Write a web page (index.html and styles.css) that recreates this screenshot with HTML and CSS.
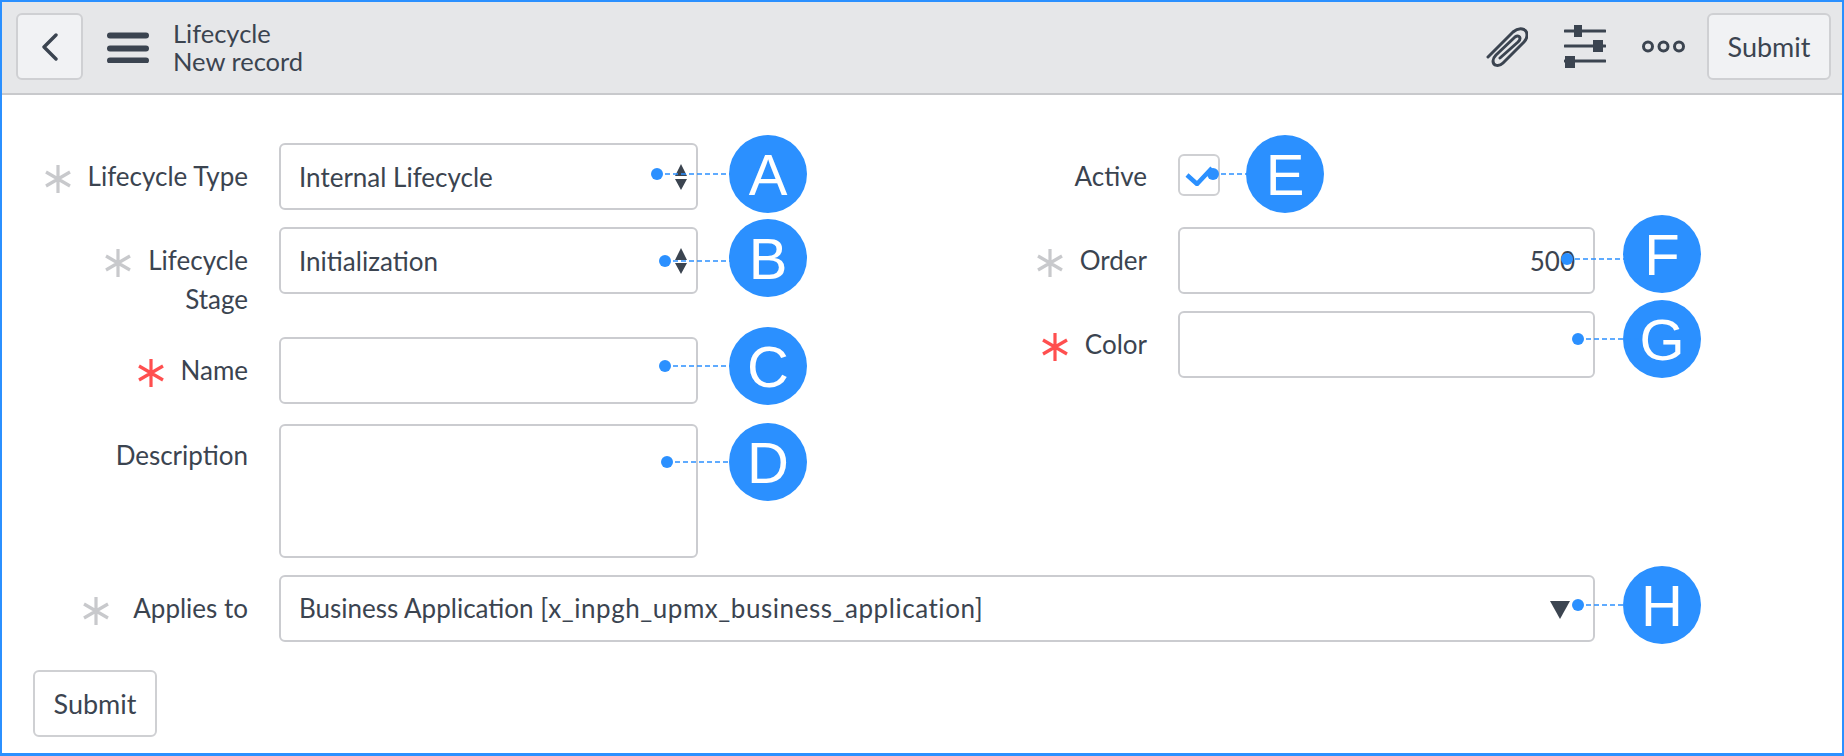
FILE: index.html
```html
<!DOCTYPE html>
<html lang="en">
<head>
<meta charset="utf-8">
<title>Lifecycle - New record</title>
<link rel="stylesheet" href="styles.css">
</head>
<body>
<svg class="defs" width="0" height="0" aria-hidden="true">
  <symbol id="star" viewBox="0 0 26 28">
    <path d="M13 0V28M1 7L25 21M25 7L1 21" fill="none" stroke="currentColor" stroke-width="3.200"/>
  </symbol>
</svg>
<div class="page">
  <header class="topbar">
    <button class="btn btn-back" aria-label="Back">
      <svg width="18" height="28" viewBox="0 0 18 28"><path d="M15 2L3 14L15 26" fill="none" stroke="#3b4450" stroke-width="3.400" stroke-linecap="round" stroke-linejoin="round"/></svg>
    </button>
    <svg class="menu" width="44" height="32" viewBox="0 0 44 32"><path d="M4 4.500H40M4 17.500H40M4 29.500H40" fill="none" stroke="#3b4450" stroke-width="6" stroke-linecap="round"/></svg>
    <div class="title"><div>Lifecycle</div><div>New record</div></div>
    <div class="tools">
      <svg class="clip" width="42" height="40" viewBox="0 0 42 40"><path d="M2 30L27 5C33 0 41 1 41 8C41 11 40 13 38 15L17 36C13 40 7 39 7 34C7 32 8 30 10 28L29 10C33 7 36 11 32 15L14 31" fill="none" stroke="#3b4450" stroke-width="3" stroke-linecap="round" stroke-linejoin="round"/></svg>
      <svg class="sliders" width="42" height="43" viewBox="0 0 42 43"><path d="M1 6H41M1 21H41M1 36H41" fill="none" stroke="#3b4450" stroke-width="3" stroke-linecap="round"/><path d="M10 0H18V12H10ZM29 15H39V27H29ZM1 31H11V43H1Z" fill="#3b4450"/></svg>
      <svg class="dots" width="43" height="13" viewBox="0 0 43 13"><circle cx="6" cy="6.500" r="4.500" fill="none" stroke="#3b4450" stroke-width="3"/><circle cx="21.500" cy="6.500" r="4.500" fill="none" stroke="#3b4450" stroke-width="3"/><circle cx="37" cy="6.500" r="4.500" fill="none" stroke="#3b4450" stroke-width="3"/></svg>
      <button class="btn btn-submit">Submit</button>
    </div>
  </header>

  <main class="form">
    <div class="columns">
      <div class="col col-left">
        <div class="row">
          <div class="label"><svg class="req"><use href="#star"/></svg><span>Lifecycle Type</span></div>
          <div class="field">Internal Lifecycle
            <svg class="updown" width="14" height="26" viewBox="0 0 14 26"><path d="M7 0L13 12H1ZM1 15H13L7 26Z" fill="#3b4450"/></svg>
          </div>
        </div>
        <div class="row row-tall">
          <div class="label"><svg class="req"><use href="#star"/></svg><span>Lifecycle<br>Stage</span></div>
          <div class="field">Initialization
            <svg class="updown" width="14" height="26" viewBox="0 0 14 26"><path d="M7 0L13 12H1ZM1 15H13L7 26Z" fill="#3b4450"/></svg>
          </div>
        </div>
        <div class="row">
          <div class="label"><svg class="req req-on"><use href="#star"/></svg><span>Name</span></div>
          <div class="field"></div>
        </div>
        <div class="row row-desc">
          <div class="label"><span>Description</span></div>
          <div class="field field-area"></div>
        </div>
      </div>
      <div class="col col-right">
        <div class="row row-check">
          <div class="label"><span>Active</span></div>
          <div class="check">
            <svg width="28" height="22" viewBox="0 0 28 22"><path d="M2 11L12 20L27 4" fill="none" stroke="#2b90ff" stroke-width="4.500"/></svg>
          </div>
        </div>
        <div class="row">
          <div class="label"><svg class="req"><use href="#star"/></svg><span>Order</span></div>
          <div class="field field-num">500</div>
        </div>
        <div class="row">
          <div class="label"><svg class="req req-on"><use href="#star"/></svg><span>Color</span></div>
          <div class="field"></div>
        </div>
      </div>
    </div>
    <div class="row row-full">
      <div class="label"><svg class="req"><use href="#star"/></svg><span>Applies to</span></div>
      <div class="field"><span>Business Application <span class="tech">[x_inpgh_upmx_business_application]</span></span>
        <svg class="caret" width="20" height="18" viewBox="0 0 20 18"><path d="M0 0H20L10 18Z" fill="#3b4450"/></svg>
      </div>
    </div>
    <button class="btn btn-bottom">Submit</button>
  </main>

  <svg class="callouts" width="1844" height="756" viewBox="0 0 1844 756">
    <g class="lines">
      <path d="M657 174H730"/>
      <path d="M665 261H730"/>
      <path d="M665 366H730"/>
      <path d="M667 462H730"/>
      <path d="M1213 174H1247"/>
      <path d="M1567 259H1624"/>
    </g>
    <g class="discs">
      <circle cx="657" cy="174" r="6"/><circle cx="768" cy="174" r="39"/>
      <circle cx="665" cy="261" r="6"/><circle cx="768" cy="258" r="39"/>
      <circle cx="665" cy="366" r="6"/><circle cx="768" cy="366" r="39"/>
      <circle cx="667" cy="462" r="6"/><circle cx="768" cy="462" r="39"/>
      <circle cx="1213" cy="174" r="6"/><circle cx="1285" cy="174" r="39"/>
      <circle cx="1567" cy="259" r="6"/><circle cx="1662" cy="254" r="39"/>
      <circle cx="1578" cy="339" r="6"/><circle cx="1662" cy="339" r="39"/>
      <circle cx="1578" cy="605" r="6"/><circle cx="1662" cy="605" r="39"/>
    </g>
    <g class="lines">
      <path d="M1578 339H1648"/>
      <path d="M1578 605H1624"/>
    </g>
    <g class="letters">
      <text x="768" y="195">A</text>
      <text x="768" y="279">B</text>
      <text x="768" y="387">C</text>
      <text x="768" y="483">D</text>
      <text x="1285" y="195">E</text>
      <text x="1662" y="275">F</text>
      <text x="1662" y="360">G</text>
      <text x="1662" y="626">H</text>
    </g>
  </svg>
</div>
</body>
</html>
```
FILE: styles.css
```css
* { box-sizing: border-box; }
html, body { margin: 0; padding: 0; background: #fff; }
body { font-family: "Lato", "Noto Sans", sans-serif; font-size: 26px; color: #3b4450; }
.defs { position: absolute; }
.page {
  position: relative;
  width: 1844px;
  height: 756px;
  overflow: hidden;
  border: 2px solid #2b90ff;
  border-bottom-width: 3px;
  display: flex;
  flex-direction: column;
}
.topbar {
  height: 93px;
  flex: none;
  background: #e6e7e9;
  border-bottom: 2px solid #c8c9cc;
  display: flex;
  align-items: center;
  padding: 0 11px 2px 14px;
}
.btn {
  font: inherit;
  font-size: 27px;
  color: inherit;
  height: 67px;
  border: 2px solid #cfd0d3;
  border-radius: 6px;
  background: #f1f2f4;
  padding: 0;
  display: flex;
  align-items: center;
  justify-content: center;
}
.btn-back { width: 67px; }
.btn-submit { width: 124px; margin-left: 22px; }
.btn-bottom { width: 124px; background: #fff; margin: 28px 0 0 17px; }
.menu { margin-left: 23px; }
.title { margin-left: 23px; line-height: 28px; font-size: 25.500px; }
.tools { margin-left: auto; display: flex; align-items: center; }
.clip { margin-right: 36px; }
.sliders { margin-right: 36px; }
.form { padding: 48px 0 0 14px; flex: 1; }
.columns { display: flex; }
.col { display: flex; flex-direction: column; gap: 17px; }
.col-left { width: 869px; }
.col-right .row { grid-template-columns: 262px 417px; }
.row { display: grid; grid-template-columns: 232px 419px; column-gap: 31px; align-items: start; }
.row-tall { height: 93px; }
.row-desc { margin-top: 3px; }
.row-desc .label { padding-top: 12px; }
.row-check { height: 67px; }
.row-full { grid-template-columns: 232px 1316px; margin-top: 17px; }
.row-full .label { gap: 24px; }
.row-full .field { padding-bottom: 2px; }
.tech { letter-spacing: 0.550px; }
.label {
  display: flex;
  justify-content: flex-end;
  align-items: flex-start;
  gap: 17px;
  text-align: right;
  padding-top: 14px;
  line-height: 39px;
}
.req { width: 26px; height: 28px; color: #c8c9cc; flex: none; margin-top: 8px; }
.req-on { color: #ff4f4f; }
.field {
  height: 67px;
  border: 2px solid #cbccd0;
  border-radius: 6px;
  background: #fff;
  padding: 0 18px;
  display: flex;
  align-items: center;
  justify-content: space-between;
}
.field-area { height: 134px; }
.field-num { justify-content: flex-end; }
.updown { margin-right: -10px; }
.caret { margin-top: 4px; margin-right: 5px; }
.check {
  width: 42px;
  height: 42px;
  margin-top: 11px;
  border: 2px solid #cfd0d3;
  border-radius: 6px;
  display: flex;
  align-items: center;
  justify-content: center;
}
.callouts { position: absolute; left: -2px; top: -2px; pointer-events: none; }
.lines path { fill: none; stroke: #2b90ff; stroke-width: 1.500; stroke-dasharray: 5 3; }
.discs circle { fill: #2b90ff; }
.letters text {
  font-family: "Liberation Sans", sans-serif;
  font-size: 58px;
  fill: #fff;
  text-anchor: middle;
}
```
